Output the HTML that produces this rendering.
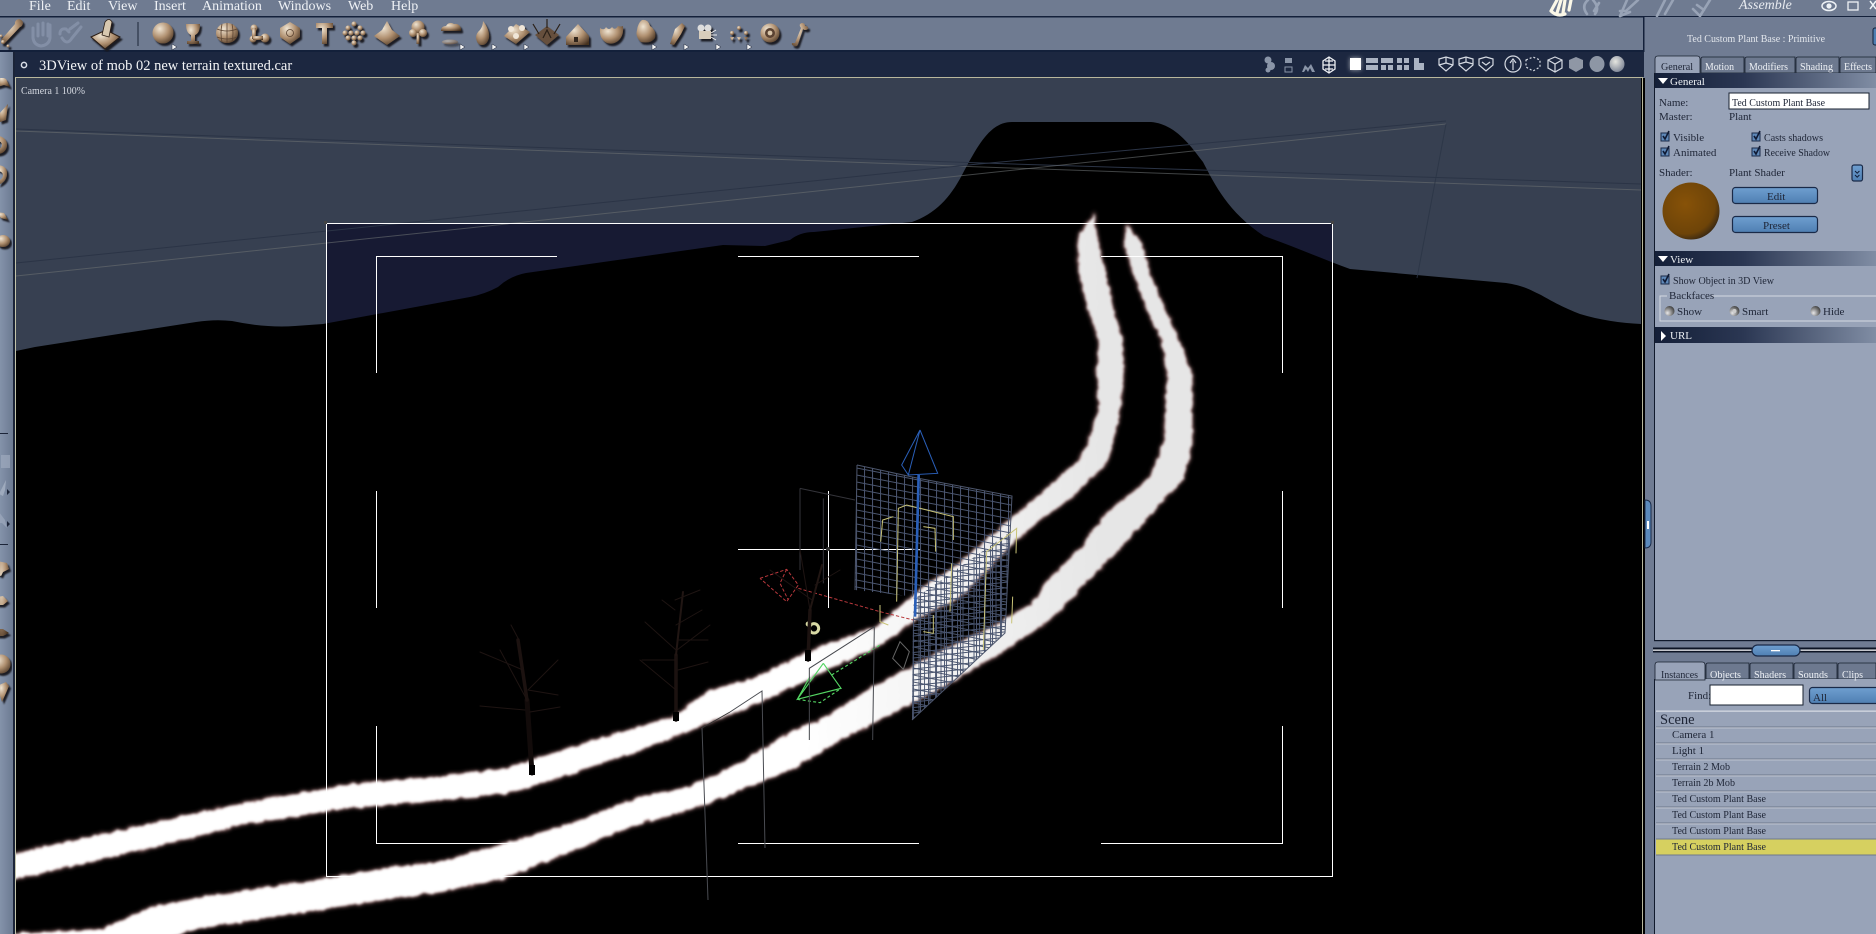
<!DOCTYPE html>
<html><head><meta charset="utf-8"><title>3DView</title>
<style>
html,body{margin:0;padding:0;background:#000;width:1876px;height:934px;overflow:hidden}
svg{display:block;position:absolute;left:0;top:0}
text{font-family:"Liberation Serif",serif;font-size:11px;fill:#1e2536}
.w{fill:#eef1f5}
</style></head><body>
<svg width="1876" height="934" viewBox="0 0 1876 934" xmlns="http://www.w3.org/2000/svg">
<defs>
<linearGradient id="sec" x1="0" x2="1" y1="0" y2="0"><stop offset="0" stop-color="#141f38"/><stop offset=".4" stop-color="#2b3753"/><stop offset="1" stop-color="#808da4"/></linearGradient>
<linearGradient id="btn" x1="0" x2="0" y1="0" y2="1"><stop offset="0" stop-color="#6f9fd0"/><stop offset="1" stop-color="#4f7fb2"/></linearGradient>
<linearGradient id="left" x1="0" x2="1" y1="0" y2="0"><stop offset="0" stop-color="#8493aa"/><stop offset="1" stop-color="#6c7a92"/></linearGradient>
<linearGradient id="road" gradientUnits="userSpaceOnUse" x1="800" y1="0" x2="1100" y2="0"><stop offset="0" stop-color="#fff"/><stop offset="1" stop-color="#e6e6e6"/></linearGradient>
<radialGradient id="tan" cx=".35" cy=".3" r=".85"><stop offset="0" stop-color="#efe4d2"/><stop offset=".5" stop-color="#b09070"/><stop offset="1" stop-color="#44301f"/></radialGradient>
<radialGradient id="brown" cx=".4" cy=".38" r=".65"><stop offset="0" stop-color="#875208"/><stop offset=".8" stop-color="#6e4408"/><stop offset="1" stop-color="#3d2a12"/></radialGradient>
<radialGradient id="radio" cx=".3" cy=".7" r=".9"><stop offset="0" stop-color="#e8e8ea"/><stop offset=".55" stop-color="#777"/><stop offset="1" stop-color="#222"/></radialGradient>
<radialGradient id="ball" cx=".4" cy=".35" r=".7"><stop offset="0" stop-color="#e6e6e0"/><stop offset="1" stop-color="#7b8394"/></radialGradient>
<filter id="sh" x="-30%" y="-30%" width="170%" height="170%"><feDropShadow dx="2" dy="2.500" stdDeviation=".9" flood-color="#15131a" flood-opacity=".95"/></filter>
<filter id="bw" filterUnits="userSpaceOnUse" x="0" y="150" width="1300" height="800"><feTurbulence type="fractalNoise" baseFrequency=".14" numOctaves="2" seed="4" result="n"/><feDisplacementMap in="SourceGraphic" in2="n" scale="5" xChannelSelector="R" yChannelSelector="G"/><feGaussianBlur stdDeviation="1.300"/></filter>
<filter id="bp" filterUnits="userSpaceOnUse" x="0" y="150" width="1300" height="800"><feTurbulence type="fractalNoise" baseFrequency=".14" numOctaves="2" seed="4" result="n"/><feDisplacementMap in="SourceGraphic" in2="n" scale="5" xChannelSelector="R" yChannelSelector="G"/><feGaussianBlur stdDeviation="2"/></filter>
<filter id="glow" x="-80%" y="-80%" width="260%" height="260%"><feGaussianBlur stdDeviation="2.500"/></filter>
<pattern id="g1" width="8" height="7" patternUnits="userSpaceOnUse" patternTransform="skewY(11)"><path d="M0 .5H8M.5 0V7" stroke="#4b5670" stroke-width="1" fill="none"/></pattern>
<pattern id="g2" width="5.500" height="5.500" patternUnits="userSpaceOnUse" patternTransform="skewY(-6)"><path d="M0 .5H5.500M.5 0V5.500" stroke="#47536e" stroke-width=".9" fill="none"/></pattern>
<clipPath id="vp"><rect x="16" y="78" width="1625" height="856"/></clipPath>
<clipPath id="lft"><rect x="0" y="78" width="12" height="856"/></clipPath>
<path id="r1" d="M10 855L149 824L249 802L348 785L423 778L440 777L507 768L573 747L640 727L673 717L707 692L757 677L807 653L840 640L877 627L920 590L960 563L1013 517L1040 495L1077 462L1088 444L1099 410L1097 375L1099 341L1088 307L1079 272L1078 238L1094 214L1097 238L1105 272L1112 307L1123 341L1123 375L1120 410L1112 444L1107 462L1073 496L1040 520L1013 543L960 597L920 617L877 647L840 663L807 680L757 703L707 723L673 737L640 750L573 773L507 793L440 800L348 808L249 823L149 848L10 880Z"/>
<path id="r2" d="M10 934L100 930L119 922L149 908L199 898L298 883L398 867L440 862L507 843L573 823L640 797L690 787L740 763L790 733L827 717L873 687L912 667L950 647L993 627L1030 605L1047 582L1081 548L1107 513L1149 479L1164 444L1166 410L1168 375L1162 341L1146 307L1133 272L1125 245L1127 226L1142 245L1149 272L1164 307L1179 341L1192 375L1192 410L1192 444L1183 479L1151 513L1120 548L1086 582L1060 610L1040 627L993 657L950 683L912 703L873 723L840 740L790 770L740 790L690 810L640 823L573 850L507 877L440 892L398 897L298 913L199 928L150 945L10 945Z"/>
</defs>

<!-- chrome -->
<rect width="1876" height="934" fill="#6f7b91"/>
<rect y="16" width="1876" height="1.500" fill="#13203a"/>
<rect y="50" width="1644" height="2" fill="#13203a"/>
<rect x="0" y="52" width="13" height="882" fill="url(#left)"/>
<rect x="13" y="52" width="2" height="882" fill="#1b2438"/>

<!-- menu -->
<g>
<text class="w" x="29" y="10" style="font-size:14px">File</text>
<text class="w" x="67" y="10" style="font-size:14px">Edit</text>
<text class="w" x="108" y="10" style="font-size:14px">View</text>
<text class="w" x="154" y="10" style="font-size:14px">Insert</text>
<text class="w" x="202" y="10" style="font-size:14px">Animation</text>
<text class="w" x="278" y="10" style="font-size:14px">Windows</text>
<text class="w" x="348" y="10" style="font-size:14px">Web</text>
<text class="w" x="391" y="10" style="font-size:14px">Help</text>
</g>
<text x="1739" y="9" style="font-size:14px;font-style:italic;fill:#e8ebf0">Assemble</text>
<!-- top right icons -->
<g fill="none" stroke="#98a3b6" stroke-width="2.600" stroke-linecap="round">
<path d="M1551 11l6-11M1557 13l4-13M1563 13l2-13M1569 10l2-10M1551 11q6 6 14 3" stroke="#fbf8e8" stroke-width="3.200"/>
<path d="M1587 14q-6-8 1-14M1593 0q7 8 2 14M1599 3l-5 8"/>
<path d="M1620 16l7-16M1638 0l-12 11h-6M1620 16l10-4"/>
<path d="M1657 16l8-16M1673 0l-8 14"/>
<path d="M1693 9l7 7 10-16M1697 5l7 5"/>
</g>
<ellipse cx="1829" cy="6" rx="7" ry="4.500" fill="none" stroke="#eef2f6" stroke-width="1.500"/><circle cx="1829" cy="6" r="2.600" fill="#eef2f6"/>
<rect x="1848" y="2" width="10" height="8" fill="none" stroke="#eef2f6" stroke-width="1.300"/>
<path d="M1870 1l6 8M1876 1l-6 8" stroke="#eef2f6" stroke-width="1.500"/>

<!-- toolbar icons -->
<g filter="url(#sh)" fill="url(#tan)">
<path d="M1 40l14-16a4 4 0 1 1 5 3l-16 17z"/>
<circle cx="3" cy="42" r="2"/><circle cx="8" cy="46" r="1.500"/><circle cx="1" cy="36" r="1.500"/>
</g>
<g fill="none" stroke="#838fa6" stroke-width="3" stroke-linecap="round">
<path d="M33 28v10q1 7 8 8q8-1 9-8v-13M38 24v12M43 23v12M48 24v12"/>
<path d="M62 38q5 8 10 0l9-11M60 34q0-6 6-5l3 3M78 23l-8 6"/>
</g>
<g filter="url(#sh)">
<path d="M91 37l15-7 14 7-15 12z" fill="url(#tan)" stroke="#2a1e14" stroke-width="1"/>
<path d="M102 35l3-13q4-5 7 0l-3 15z" fill="#d8c8b0" stroke="#2a1e14" stroke-width=".8"/>
</g>
<rect x="137.500" y="22" width="1" height="24" fill="#1b2438"/>
<g filter="url(#sh)" fill="url(#tan)">
<circle cx="163" cy="33" r="10.500"/>
<path d="M186 24h14q0 9-5 11v6h4v3h-12v-3h4v-6q-5-2-5-11z"/>
<ellipse cx="227" cy="33" rx="11" ry="10"/>
<circle cx="254" cy="28" r="3.500"/><circle cx="265" cy="38" r="4.500"/><circle cx="253" cy="39" r="3.500"/><rect x="252" y="28" width="4" height="11"/><rect x="253" y="36" width="10" height="4"/>
<path d="M290 22l10 6v9l-10 7-10-7v-9z"/>
<path d="M316 23h17v5h-6v16h-5v-16h-6z"/>
<circle cx="354" cy="24" r="2.500"/><circle cx="348" cy="28" r="2.500"/><circle cx="360" cy="28" r="2.500"/><circle cx="345" cy="33" r="2.500"/><circle cx="351" cy="33" r="2.500"/><circle cx="357" cy="33" r="2.500"/><circle cx="363" cy="33" r="2.500"/><circle cx="348" cy="38" r="2.500"/><circle cx="354" cy="38" r="2.500"/><circle cx="360" cy="38" r="2.500"/><circle cx="354" cy="43" r="2.500"/>
<path d="M387 21l5 9 8 6-13 9-13-9 8-6z"/>
<circle cx="418" cy="27" r="6.500"/><circle cx="413" cy="33" r="4"/><circle cx="423" cy="33" r="4"/><rect x="416.500" y="33" width="3" height="11"/>
<path d="M441 31q0-5 5-5q3-5 8-2q6-1 7 5q1 2-2 2z"/><ellipse cx="450" cy="42" rx="8" ry="2.500" opacity=".5"/>
<path d="M483 21q7 9 6 17q-2 7-7 7t-6-7q0-5 4-8q3-4 3-9z"/>
<path d="M516 24l14 8-14 12-12-8z"/><circle cx="511" cy="29" r="3" fill="#f0e6d8"/><circle cx="522" cy="28" r="3" fill="#f0e6d8"/><circle cx="516" cy="36" r="3" fill="#f0e6d8"/>
<path d="M547 26l12 9-12 10-12-10z" fill="#66503c"/>
<path d="M566 37l12-13 11 12v9h-23z"/><rect x="574" y="37" width="4" height="5" fill="#33261c"/>
<path d="M600 28q4 3 6-1q3 4 6 0q3 4 6-1q3 1 5 0q1 10-5 15q-5 4-11 2q-8-4-7-15z"/>
<path d="M642 20q6-1 8 6q7 5 5 12q-4 6-14 4q-6-5-4-12q1-7 5-10z"/>
<path d="M670 44l5-15 7-6 3 3-4 8-7 11z"/>
<circle cx="701" cy="28" r="3.500" fill="#ddd"/><circle cx="708" cy="28" r="3.500" fill="#ddd"/><rect x="699" y="31" width="12" height="8" fill="#d8cdbc"/>
<circle cx="739" cy="28" r="2"/><circle cx="732" cy="33" r="2"/><circle cx="746" cy="33" r="2"/><path d="M730 37h4l-2 4zM737 37h4l-2 4zM744 37h4l-2 4z"/>
<circle cx="770" cy="33" r="9.500"/><circle cx="770" cy="33" r="5" fill="#5a4332"/><circle cx="770" cy="33" r="2.400" fill="#d8c4a8"/>
<path d="M795 43l6-15q-3-4 1-5 3 0 3 3 4 0 3 3-3 2-5 0l-5 15q-1 3-4 2-3-1-2-3z"/>
</g>
<g fill="none" stroke="#5a4332" stroke-width=".8">
<path d="M217 29q10 4 20 0M217 37q10 4 20 0M222 24q-2 9 0 18M232 24q2 9 0 18M227 23v20"/>
<circle cx="290" cy="33" r="3.500"/>
</g>
<path d="M711 33l5-3M711 35h6M711 37l5 3" stroke="#eee" fill="none"/>
<path d="M539 34l-6-10M547 28v-9M554 34l6-10M543 38l4-8 4 8" stroke="#2a2018" stroke-width="1.200" fill="none"/>
<g fill="#f4f4f4" stroke="#1b2438" stroke-width=".5">
<path d="M172 44l5 3-5 3zM460 44l5 3-5 3zM492 44l5 3-5 3zM524 44l5 3-5 3zM652 44l5 3-5 3zM684 44l5 3-5 3zM716 44l5 3-5 3zM747 44l5 3-5 3z"/>
</g>

<!-- title bar -->
<rect x="15" y="52" width="1629" height="25" fill="#1c2740"/>
<circle cx="24" cy="65" r="2.600" fill="none" stroke="#d8dde6" stroke-width="1.500"/>
<text x="39" y="70" style="font-size:14.500px;fill:#f3f4f6">3DView of mob 02 new terrain textured.car</text>
<rect x="15" y="77" width="1628" height="1.500" fill="#b8b79c"/>
<!-- title icons -->
<g fill="#8a95a8">
<circle cx="1268" cy="60" r="3.500"/><circle cx="1271" cy="66" r="4"/><circle cx="1268" cy="70" r="2.500"/>
<rect x="1285" y="58" width="7" height="5"/><rect x="1285" y="67" width="7" height="5" fill="none" stroke="#8a95a8"/>
<path d="M1302 72l3-7 3 3 3-4 4 8h-3l-2-4-2 4-2-3-2 3z"/>
</g>
<g fill="none" stroke="#eef0f4" stroke-width="1.300"><path d="M1329 57l6 4v8l-6 4-6-4v-8z"/><path d="M1323 65h12M1329 57v16M1325 61h8M1325 69h8"/></g>
<rect x="1350" y="58" width="11" height="12" fill="#fbfbf8" filter="url(#glow)" opacity=".6"/>
<rect x="1350" y="58" width="11" height="12" fill="#fff"/>
<g fill="#aab3c2">
<rect x="1366" y="58" width="12" height="5"/><rect x="1366" y="65" width="12" height="5"/>
<rect x="1381" y="58" width="12" height="5"/><rect x="1381" y="65" width="5" height="5"/><rect x="1388" y="65" width="5" height="5"/>
<rect x="1397" y="58" width="5" height="5"/><rect x="1404" y="58" width="5" height="5"/><rect x="1397" y="65" width="5" height="5"/><rect x="1404" y="65" width="5" height="5"/>
<path d="M1414 58h5v5h5v7h-10z"/>
</g>
<g fill="none" stroke="#d5dae2" stroke-width="1.200">
<path d="M1439 59l7-2 7 2v6l-7 6-7-6z M1446 57v6l-7 2M1446 63l7 2"/>
<path d="M1459 59l7-2 7 2v6l-7 6-7-6z M1466 57v5M1459 64l7-2 7 2"/>
<path d="M1479 59l7-2 7 2v6l-7 6-7-6z M1482 62l4 3 4-3"/>
<circle cx="1513" cy="64" r="8"/><path d="M1513 70v-9M1510 63l3-4 3 4"/>
<path d="M1526 60l7-3 7 3v7l-7 4-7-4z" stroke-dasharray="2 2"/>
<path d="M1548 60l7-3 7 3v8l-7 4-7-4zM1548 60l7 4 7-4M1555 64v8"/>
</g>
<path d="M1569 60l7-3 7 3v8l-7 4-7-4z" fill="#8f97a5"/>
<ellipse cx="1597" cy="64" rx="7.500" ry="8" fill="#8d96a5"/>
<ellipse cx="1617" cy="64" rx="7.500" ry="8" fill="url(#ball)"/>

<!-- left toolbar icons -->
<g clip-path="url(#lft)"><g filter="url(#sh)" fill="url(#tan)">
<path d="M-3 75l9 4 4 8-6-2-7 2z"/>
<path d="M-2 115l10-11-2 16-6 2z"/>
<path d="M-2 136a9 9 0 0 1 0 18a9 9 0 0 1 0-18zM-2 141v8a4 4 0 0 0 0-8z" fill-rule="evenodd"/>
<path d="M-4 165q12 0 11 10-1 7-9 10l2-5q3-2 3-5t-6-5z"/>
<path d="M-4 212l8 1 4 7-7-2z"/>
<ellipse cx="3" cy="241" rx="7" ry="6"/>
<path d="M-3 561l10 2 2 6-6 3-2 4-4-2zM-3 597l6-1 5 5-5 4h-6zM-3 629h6l6 4-6 3h-6z"/>
<circle cx="1" cy="664" r="9.500"/>
<path d="M-3 686l9-4 3 4-7 16z"/>
</g></g>
<g fill="#9eaabd"><rect x="1" y="455" width="9" height="13" opacity=".7"/><path d="M-1 494l7-14 -1 10-2 6z"/><path d="M-1 512l6 8 2 8-5-5-3 0z" opacity=".7"/></g>
<rect x="0" y="433" width="8" height="1" fill="#1b2438"/><rect x="0" y="544" width="8" height="1" fill="#1b2438"/>
<path d="M7 489l3 3-3 3zM7 521l3 3-3 3z" fill="#1b2438"/>

<!-- viewport -->
<g clip-path="url(#vp)">
<rect x="16" y="78" width="1625" height="856" fill="#374051"/>
<rect x="326" y="223" width="1006" height="653" fill="#171a33"/>
<path fill="#000" d="M16 351L35 347L196 322Q215 319 232 321Q265 328 295 326L323 324L470 297Q485 294 498 287Q510 276 526 273L723 245L765 246L790 240Q800 232 814 232L912 222C935 214 950 198 962 175C978 145 990 122 1012 122L1151 122C1175 124 1190 145 1203 162C1215 185 1228 212 1264 236C1290 245 1320 258 1350 269L1506 283C1525 286 1530 290 1541 295C1560 306 1570 310 1580 314C1600 320 1620 323 1641 324V934H16Z"/>
<!-- perspective guide lines -->
<g fill="none" stroke-width="1">
<path d="M16 129L982 163L1641 184" stroke="#2b3446"/>
<path d="M16 131L982 167L1641 190" stroke="#6a6f72" opacity=".6"/>
<path d="M16 263L968 165L1446 121" stroke="#2b3446"/>
<path d="M16 276L968 175L1446 124" stroke="#6a6f72" opacity=".6"/>
<path d="M1446 124L1417 278" stroke="#2b3446" opacity=".8"/>
</g>
<!-- roads -->
<g fill="#a87878" stroke="#a87878" stroke-width="1.500" filter="url(#bp)">
<use href="#r1"/><use href="#r2"/>
</g>
<g fill="url(#road)" filter="url(#bw)">
<use href="#r1"/><use href="#r2"/>
</g>
<!-- camera frame -->
<g fill="none" stroke="#fff" stroke-width="1" shape-rendering="crispEdges">
<rect x="326.500" y="223.500" width="1006" height="653"/>
<path d="M376.500 373V256.500H557M738 256.500H919M1101 256.500H1282.500V373M376.500 491V608M1282.500 491V608M376.500 726V843.500H557M738 843.500H919M1101 843.500H1282.500V726"/>
<path d="M738 549.500H920M828.500 491V608"/>
</g>
<circle cx="828" cy="549" r="2" fill="#333"/>
<rect x="324" y="221" width="3" height="3" fill="#444"/><rect x="1331" y="221" width="3" height="3" fill="#444"/>
<!-- grids -->
<path d="M857 465L917 478V597L855 590Z" fill="url(#g1)"/>
<path d="M917 478L1012 496L1005 633L912 720L913 620Z" fill="url(#g1)"/>
<path d="M917 597L1010 532L1005 633L912 720L913 620Z" fill="url(#g2)"/>
<path d="M857 465L917 478L1012 496L1005 633L912 720M855 590L857 465" fill="none" stroke="#4d566c"/>
<!-- gizmos in zoomed coordinates -->
<g transform="translate(760 420) scale(.33333)" fill="none">
<g stroke="#34343a" stroke-width="3"><path d="M120 205L285 240M120 205V450M190 235V490"/></g>
<g stroke="#c9c377" stroke-width="3">
<path d="M410 545L415 265L440 255L580 290L580 360M575 430L570 575"/>
<path d="M362 365L368 300L400 290M490 320L525 325L527 395M520 585V640L490 635"/>
<path d="M670 690L680 395L770 325L768 400M755 610L758 530M360 555V605L385 615"/>
</g>
<g stroke="#2a5fb8" stroke-width="3">
<path d="M480 30L533 160L445 165L425 135L480 30L445 165"/>
</g>
<path d="M476 165L465 590" stroke="#2a5fb8" stroke-width="8"/>
<g stroke="#b8383c" stroke-width="3" stroke-dasharray="10 6">
<path d="M0 475L80 448L115 495L80 545L0 475M80 448L60 490L85 540M115 505L360 575L460 600"/>
</g>
<g stroke="#53d462" stroke-width="3.500">
<path d="M190 730L243 805L112 838L190 730M150 770L112 838"/>
<path d="M215 765L360 675M112 838L180 848L243 805" stroke-dasharray="9 7"/>
</g>
<path d="M420 665L448 695L430 748L398 715Z" stroke="#666" stroke-width="3"/>
<path d="M148 960V745L343 620L338 960" stroke="#45474d" stroke-width="3"/>
<circle cx="162" cy="625" r="14" stroke="#d8d9a4" stroke-width="9"/><circle cx="145" cy="612" r="8" fill="#d8d9a4"/>
</g>
<g fill="none" stroke="#4a4c52" stroke-width="1">
<path d="M702 728L708 900M730 712L762 691L765 848"/>
<path d="M702 728L730 712" stroke="#333"/>
</g>
<!-- trees -->
<g fill="none" stroke-linecap="round">
<path d="M532 773L527 700" stroke="#120b0a" stroke-width="5"/>
<path d="M527 700L518 640M676 720V655M808 660L810 610" stroke="#1c1210" stroke-width="3.500"/>
<path d="M676 655L683 592M810 610L822 565" stroke="#211613" stroke-width="2"/>
<g stroke="#1e1412" stroke-width="1">
<path d="M527 700L500 650M519 640L511 625M528 690L558 660M523 670L480 652M528 690L558 695M525 710L480 706M530 712L560 707"/>
<path d="M676 650L645 622M677 650L710 625M677 640L708 640M676 660L642 660M678 670L708 662M676 625L702 610M675 610L662 600M675 600L700 590M676 690L640 660"/>
<path d="M810 610L800 550M815 585L840 570M812 600L770 570"/>
</g>
<rect x="529" y="765" width="6" height="10" fill="#000"/><rect x="673" y="712" width="6" height="9" fill="#000"/><rect x="805" y="650" width="6" height="11" fill="#000"/>
</g>
</g>
<rect x="1641" y="78" width="2" height="856" fill="#b8b79c"/>
<rect x="15" y="78" width="1" height="856" fill="#c2c3aa"/>

<!-- right column -->
<rect x="1644" y="17" width="232" height="917" fill="#707c93"/>
<rect x="1643" y="17" width="1.500" height="35" fill="#13203a"/>
<rect x="1643" y="78" width="2" height="856" fill="#000"/>
<rect x="1641" y="78" width="1" height="856" fill="#000"/>
<rect x="1654" y="73" width="1" height="568" fill="#111a2c"/>
<text x="1687" y="42" textLength="138" lengthAdjust="spacingAndGlyphs" style="fill:#e2e6ec">Ted Custom Plant Base : Primitive</text>
<rect x="1873" y="28" width="6" height="17" rx="2" fill="#4f7fb2" stroke="#13203a"/>
<!-- side handle -->
<path d="M1645 500q6 0 6 6v36q0 6-6 6z" fill="#5b8abc" stroke="#1a2a48"/>
<rect x="1647" y="521" width="2" height="8" fill="#fff"/>

<!-- upper tabs -->
<g stroke="#17202f" stroke-width=".8">
<path d="M1701 73V59q0-2 2-2h41V73Z" fill="#6d798f"/>
<path d="M1745 73V59q0-2 2-2h48V73Z" fill="#6d798f"/>
<path d="M1796 73V59q0-2 2-2h41V73Z" fill="#6d798f"/>
<path d="M1840 73V59q0-2 2-2h34V73Z" fill="#6d798f"/>
</g>
<rect x="1655" y="73" width="221" height="567" fill="#98a3b8"/>
<path d="M1655 74V59q0-3 3-3h39q3 0 3 3V74Z" fill="#98a3b8" stroke="#17202f" stroke-width=".8"/>
<text x="1661" y="70" textLength="32" lengthAdjust="spacingAndGlyphs">General</text>
<text class="w" x="1705" y="70" textLength="29" lengthAdjust="spacingAndGlyphs">Motion</text>
<text class="w" x="1749" y="70" textLength="39" lengthAdjust="spacingAndGlyphs">Modifiers</text>
<text class="w" x="1800" y="70" textLength="33" lengthAdjust="spacingAndGlyphs">Shading</text>
<text class="w" x="1844" y="70" textLength="28" lengthAdjust="spacingAndGlyphs">Effects</text>
<!-- general section -->
<rect x="1655" y="73" width="221" height="15" fill="url(#sec)"/>
<path d="M1658 78h10l-5 6z" fill="#fff"/>
<text class="w" x="1670" y="85">General</text>
<text x="1659" y="106">Name:</text>
<rect x="1729" y="93" width="140" height="16" fill="#fff" stroke="#17202f"/>
<text x="1732" y="106" textLength="93" lengthAdjust="spacingAndGlyphs">Ted Custom Plant Base</text>
<text x="1659" y="120">Master:</text>
<text x="1729" y="120">Plant</text>

<g fill="#5f88b8" stroke="#1a2a48" stroke-width="1">
<rect x="1661" y="133" width="8" height="8"/><rect x="1752" y="133" width="8" height="8"/>
<rect x="1661" y="148" width="8" height="8"/><rect x="1752" y="148" width="8" height="8"/>
<rect x="1661" y="276" width="8" height="8"/>
</g>
<g fill="none" stroke="#0f1a34" stroke-width="1.600">
<path d="M1663 136l2 3 4-8M1754 136l2 3 4-8M1663 151l2 3 4-8M1754 151l2 3 4-8M1663 279l2 3 4-8"/>
</g>
<text x="1673" y="141">Visible</text>
<text x="1764" y="141" textLength="59" lengthAdjust="spacingAndGlyphs">Casts shadows</text>
<text x="1673" y="156">Animated</text>
<text x="1764" y="156" textLength="66" lengthAdjust="spacingAndGlyphs">Receive Shadow</text>
<text x="1659" y="176">Shader:</text>
<text x="1729" y="176">Plant Shader</text>
<rect x="1852" y="165" width="10.500" height="16" rx="2" fill="url(#btn)" stroke="#1a2a48" stroke-width="1.200"/>
<path d="M1855 171l2.200 2.200 2.200-2.200M1855 175l2.200 2.200 2.200-2.200" fill="none" stroke="#0f1a34"/>
<circle cx="1691" cy="211" r="28.500" fill="url(#brown)"/>
<rect x="1732.500" y="187.500" width="85" height="16" rx="3" fill="url(#btn)" stroke="#1a2a48" stroke-width="1.200"/>
<text x="1767" y="200">Edit</text>
<rect x="1732.500" y="216.500" width="85" height="16" rx="3" fill="url(#btn)" stroke="#1a2a48" stroke-width="1.200"/>
<text x="1763" y="229">Preset</text>
<!-- view section -->
<rect x="1655" y="251" width="221" height="15" fill="url(#sec)"/>
<path d="M1658 256h10l-5 6z" fill="#fff"/>
<text class="w" x="1670" y="263">View</text>
<text x="1673" y="284" textLength="101" lengthAdjust="spacingAndGlyphs">Show Object in 3D View</text>
<path d="M1667 296H1660V321H1876M1712 296H1876" fill="none" stroke="#d4d9e2"/>
<text x="1669" y="299">Backfaces</text>
<circle cx="1669.500" cy="311" r="5" fill="url(#radio)"/>
<text x="1677" y="315">Show</text>
<circle cx="1734.500" cy="311" r="5" fill="url(#radio)"/><circle cx="1734.500" cy="311" r="2" fill="#ccc"/>
<text x="1742" y="315">Smart</text>
<circle cx="1815.500" cy="311" r="5" fill="url(#radio)"/>
<text x="1823" y="315">Hide</text>
<rect x="1655" y="327" width="221" height="16" fill="url(#sec)"/>
<path d="M1661 331l5 5-5 5z" fill="#fff"/>
<text class="w" x="1670" y="339">URL</text>
<rect x="1654" y="640" width="222" height="1.200" fill="#111a2c"/>

<!-- splitter -->
<rect x="1653" y="647.500" width="223" height="5" fill="#0d1424"/>
<rect x="1653" y="649.500" width="223" height="1.300" fill="#f1f3f6"/>
<rect x="1752" y="645" width="48" height="11" rx="5.500" fill="url(#btn)" stroke="#1a2a48" stroke-width="1.200"/>
<rect x="1771" y="650" width="9" height="1.300" fill="#fff"/>

<!-- lower tabs -->
<g stroke="#17202f" stroke-width=".8">
<path d="M1706 679V665q0-2 2-2h41V679Z" fill="#6d798f"/>
<path d="M1750 679V665q0-2 2-2h41V679Z" fill="#6d798f"/>
<path d="M1794 679V665q0-2 2-2h41V679Z" fill="#6d798f"/>
<path d="M1838 679V665q0-2 2-2h36V679Z" fill="#6d798f"/>
</g>
<rect x="1655" y="679" width="221" height="255" fill="#98a3b8"/>
<rect x="1654" y="679" width="1" height="255" fill="#111a2c"/>
<path d="M1655 680V665q0-3 3-3h44q3 0 3 3V680Z" fill="#98a3b8" stroke="#17202f" stroke-width=".8"/>
<text x="1661" y="678" textLength="37" lengthAdjust="spacingAndGlyphs">Instances</text>
<text class="w" x="1710" y="678" textLength="31" lengthAdjust="spacingAndGlyphs">Objects</text>
<text class="w" x="1754" y="678" textLength="32" lengthAdjust="spacingAndGlyphs">Shaders</text>
<text class="w" x="1798" y="678" textLength="30" lengthAdjust="spacingAndGlyphs">Sounds</text>
<text class="w" x="1842" y="678" textLength="21" lengthAdjust="spacingAndGlyphs">Clips</text>
<text x="1688" y="699">Find:</text>
<rect x="1710" y="685" width="93" height="20" fill="#fff" stroke="#17202f"/>
<rect x="1809.500" y="687.500" width="80" height="16" rx="3" fill="url(#btn)" stroke="#1a2a48" stroke-width="1.200"/>
<text x="1813" y="701">All</text>
<!-- list -->
<rect x="1656" y="710.500" width="220" height="1.300" fill="#d4d9e2"/>
<text x="1660" y="724" style="font-size:14.500px">Scene</text>
<rect x="1656" y="838.500" width="220" height="16" fill="#d6d060"/>
<g fill="#6e788c">
<rect x="1656" y="726.500" width="220" height="1"/><rect x="1656" y="742.500" width="220" height="1"/><rect x="1656" y="758.500" width="220" height="1"/><rect x="1656" y="774.500" width="220" height="1"/><rect x="1656" y="790.500" width="220" height="1"/><rect x="1656" y="806.500" width="220" height="1"/><rect x="1656" y="822.500" width="220" height="1"/><rect x="1656" y="838.500" width="220" height="1"/><rect x="1656" y="854.500" width="220" height="1"/>
</g>
<g fill="#d4d9e2">
<rect x="1656" y="727.500" width="220" height=".8"/><rect x="1656" y="743.500" width="220" height=".8"/><rect x="1656" y="759.500" width="220" height=".8"/><rect x="1656" y="775.500" width="220" height=".8"/><rect x="1656" y="791.500" width="220" height=".8"/><rect x="1656" y="807.500" width="220" height=".8"/><rect x="1656" y="823.500" width="220" height=".8"/>
</g>
<text x="1672" y="738">Camera 1</text>
<text x="1672" y="754">Light 1</text>
<text x="1672" y="770" textLength="58" lengthAdjust="spacingAndGlyphs">Terrain 2 Mob</text>
<text x="1672" y="786" textLength="63" lengthAdjust="spacingAndGlyphs">Terrain 2b Mob</text>
<text x="1672" y="802" textLength="94" lengthAdjust="spacingAndGlyphs">Ted Custom Plant Base</text>
<text x="1672" y="818" textLength="94" lengthAdjust="spacingAndGlyphs">Ted Custom Plant Base</text>
<text x="1672" y="834" textLength="94" lengthAdjust="spacingAndGlyphs">Ted Custom Plant Base</text>
<text x="1672" y="850" textLength="94" lengthAdjust="spacingAndGlyphs">Ted Custom Plant Base</text>

<!-- viewport label on top -->
<text x="21" y="94" textLength="64" lengthAdjust="spacingAndGlyphs" style="fill:#d6dae2;font-size:10.500px">Camera 1 100%</text>
</svg>
</body></html>
